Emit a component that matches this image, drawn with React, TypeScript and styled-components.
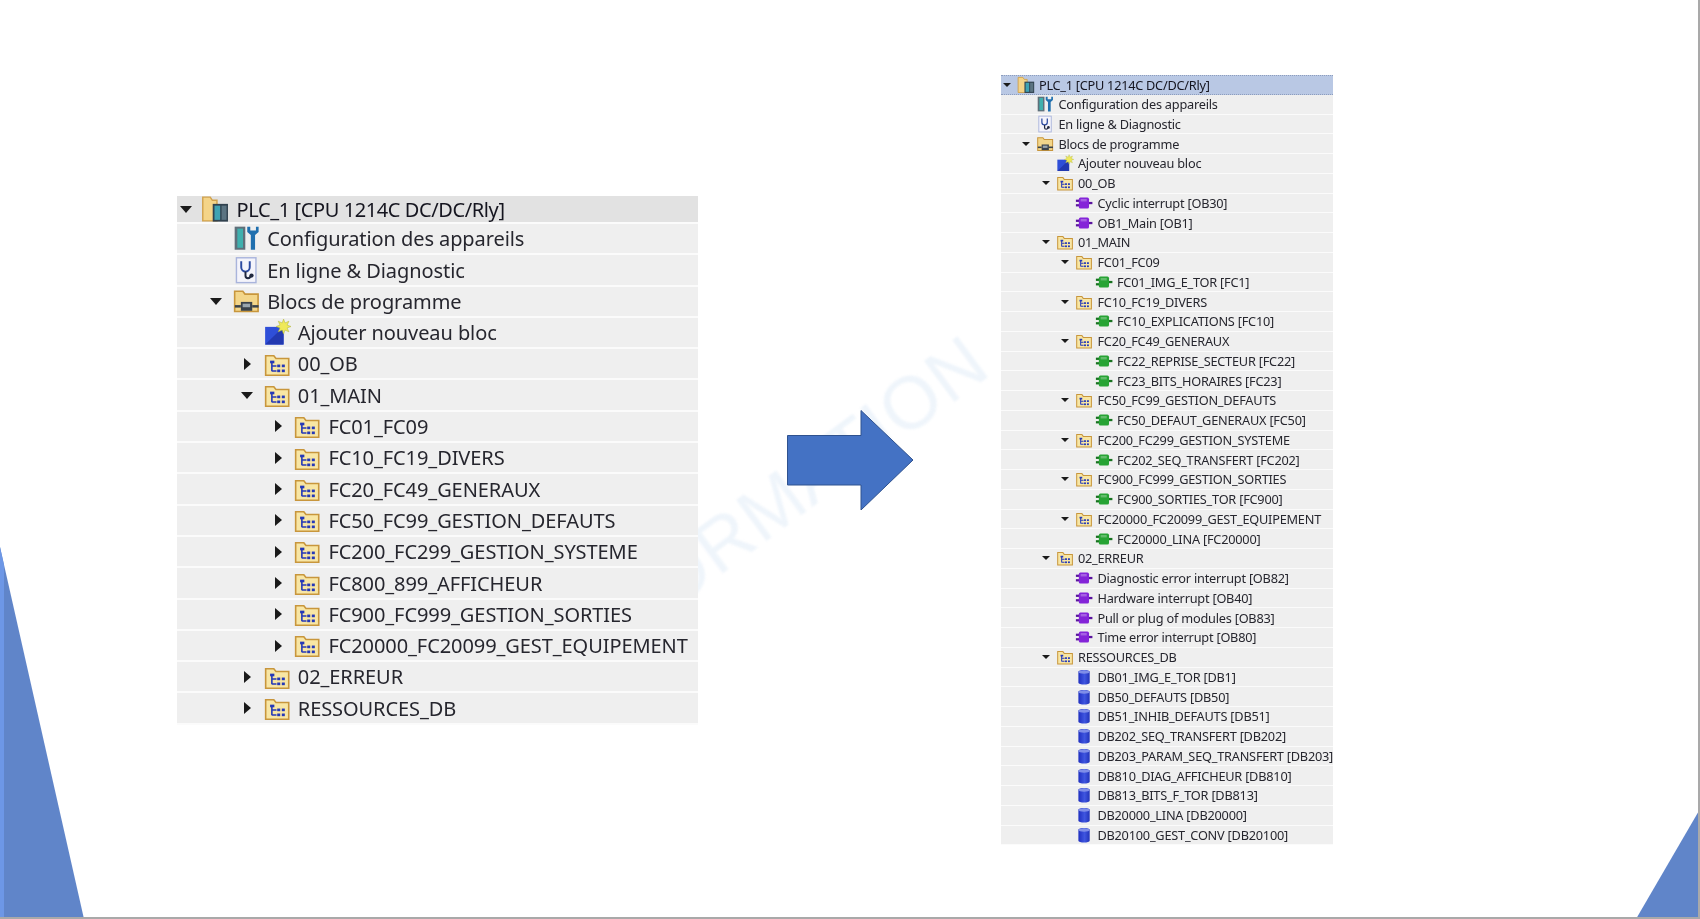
import React from "react";
import styled, { createGlobalStyle } from "styled-components";

type Kind = "device" | "tool" | "diag" | "program" | "add" | "group" | "ob" | "fc" | "db";
type Item = { level: number; kind: Kind; label: string; caret?: "open" | "closed" };

const leftItems: Item[] = [
  { level: 0, kind: "device", label: "PLC_1 [CPU 1214C DC/DC/Rly]", caret: "open" },
  { level: 1, kind: "tool", label: "Configuration des appareils" },
  { level: 1, kind: "diag", label: "En ligne & Diagnostic" },
  { level: 1, kind: "program", label: "Blocs de programme", caret: "open" },
  { level: 2, kind: "add", label: "Ajouter nouveau bloc" },
  { level: 2, kind: "group", label: "00_OB", caret: "closed" },
  { level: 2, kind: "group", label: "01_MAIN", caret: "open" },
  { level: 3, kind: "group", label: "FC01_FC09", caret: "closed" },
  { level: 3, kind: "group", label: "FC10_FC19_DIVERS", caret: "closed" },
  { level: 3, kind: "group", label: "FC20_FC49_GENERAUX", caret: "closed" },
  { level: 3, kind: "group", label: "FC50_FC99_GESTION_DEFAUTS", caret: "closed" },
  { level: 3, kind: "group", label: "FC200_FC299_GESTION_SYSTEME", caret: "closed" },
  { level: 3, kind: "group", label: "FC800_899_AFFICHEUR", caret: "closed" },
  { level: 3, kind: "group", label: "FC900_FC999_GESTION_SORTIES", caret: "closed" },
  { level: 3, kind: "group", label: "FC20000_FC20099_GEST_EQUIPEMENT", caret: "closed" },
  { level: 2, kind: "group", label: "02_ERREUR", caret: "closed" },
  { level: 2, kind: "group", label: "RESSOURCES_DB", caret: "closed" },
];

const rightItems: Item[] = [
  { level: 0, kind: "device", label: "PLC_1 [CPU 1214C DC/DC/Rly]", caret: "open" },
  { level: 1, kind: "tool", label: "Configuration des appareils" },
  { level: 1, kind: "diag", label: "En ligne & Diagnostic" },
  { level: 1, kind: "program", label: "Blocs de programme", caret: "open" },
  { level: 2, kind: "add", label: "Ajouter nouveau bloc" },
  { level: 2, kind: "group", label: "00_OB", caret: "open" },
  { level: 3, kind: "ob", label: "Cyclic interrupt [OB30]" },
  { level: 3, kind: "ob", label: "OB1_Main [OB1]" },
  { level: 2, kind: "group", label: "01_MAIN", caret: "open" },
  { level: 3, kind: "group", label: "FC01_FC09", caret: "open" },
  { level: 4, kind: "fc", label: "FC01_IMG_E_TOR [FC1]" },
  { level: 3, kind: "group", label: "FC10_FC19_DIVERS", caret: "open" },
  { level: 4, kind: "fc", label: "FC10_EXPLICATIONS [FC10]" },
  { level: 3, kind: "group", label: "FC20_FC49_GENERAUX", caret: "open" },
  { level: 4, kind: "fc", label: "FC22_REPRISE_SECTEUR [FC22]" },
  { level: 4, kind: "fc", label: "FC23_BITS_HORAIRES [FC23]" },
  { level: 3, kind: "group", label: "FC50_FC99_GESTION_DEFAUTS", caret: "open" },
  { level: 4, kind: "fc", label: "FC50_DEFAUT_GENERAUX [FC50]" },
  { level: 3, kind: "group", label: "FC200_FC299_GESTION_SYSTEME", caret: "open" },
  { level: 4, kind: "fc", label: "FC202_SEQ_TRANSFERT [FC202]" },
  { level: 3, kind: "group", label: "FC900_FC999_GESTION_SORTIES", caret: "open" },
  { level: 4, kind: "fc", label: "FC900_SORTIES_TOR [FC900]" },
  { level: 3, kind: "group", label: "FC20000_FC20099_GEST_EQUIPEMENT", caret: "open" },
  { level: 4, kind: "fc", label: "FC20000_LINA [FC20000]" },
  { level: 2, kind: "group", label: "02_ERREUR", caret: "open" },
  { level: 3, kind: "ob", label: "Diagnostic error interrupt [OB82]" },
  { level: 3, kind: "ob", label: "Hardware interrupt [OB40]" },
  { level: 3, kind: "ob", label: "Pull or plug of modules [OB83]" },
  { level: 3, kind: "ob", label: "Time error interrupt [OB80]" },
  { level: 2, kind: "group", label: "RESSOURCES_DB", caret: "open" },
  { level: 3, kind: "db", label: "DB01_IMG_E_TOR [DB1]" },
  { level: 3, kind: "db", label: "DB50_DEFAUTS [DB50]" },
  { level: 3, kind: "db", label: "DB51_INHIB_DEFAUTS [DB51]" },
  { level: 3, kind: "db", label: "DB202_SEQ_TRANSFERT [DB202]" },
  { level: 3, kind: "db", label: "DB203_PARAM_SEQ_TRANSFERT [DB203]" },
  { level: 3, kind: "db", label: "DB810_DIAG_AFFICHEUR [DB810]" },
  { level: 3, kind: "db", label: "DB813_BITS_F_TOR [DB813]" },
  { level: 3, kind: "db", label: "DB20000_LINA [DB20000]" },
  { level: 3, kind: "db", label: "DB20100_GEST_CONV [DB20100]" },
];

const GlobalStyle = createGlobalStyle`
  html, body { margin: 0; padding: 0; background: #fff; }
  body { font-family: "Noto Sans", "Open Sans", sans-serif; }
`;

const Slide = styled.div`
  position: relative;
  width: 1700px;
  height: 919px;
  overflow: hidden;
  background: #fff;
  box-sizing: border-box;
  padding-left: 177px;
  display: flex;
  align-items: flex-start;
`;

const Corner = styled.svg<{ $side: "left" | "right" }>`
  position: absolute;
  bottom: 0;
  ${(p) => (p.$side === "left" ? "left: 0;" : "right: 0;")}
`;

const Edge = styled.div`
  position: absolute;
  inset: 0;
  border-right: 2px solid #a9a9a9;
  border-bottom: 2px solid #a9a9a9;
  pointer-events: none;
`;

const Watermark = styled.div`
  position: absolute;
  right: 722px;
  top: 316px;
  transform-origin: 100% 50%;
  transform: rotate(-36.5deg);
  font-size: 74px;
  line-height: 1;
  letter-spacing: 1px;
  color: #eff5fb;
  white-space: nowrap;
  font-family: "Liberation Sans", sans-serif;
  filter: blur(0.8px);
`;

const Tree = styled.div<{ $size: number; $top: number; $width: number; $spacing: number }>`
  position: relative;
  z-index: 1;
  flex: none;
  width: ${(p) => p.$width}px;
  margin-top: ${(p) => p.$top}px;
  font-size: ${(p) => p.$size}px;
  letter-spacing: ${(p) => p.$spacing}em;
  filter: blur(0.35px);
`;

const Row = styled.div<{ $level: number; $pitch: number; $head?: "grey" | "blue" }>`
  box-sizing: border-box;
  height: ${(p) => (p.$head === "grey" ? 28 : p.$pitch)}px;
  padding-left: ${(p) => p.$level * 1.53}em;
  display: flex;
  align-items: center;
  background: ${(p) => (p.$head === "blue" ? "#b9c8e4" : p.$head === "grey" ? "#e2e2e2" : "#efefef")};
  border-bottom: 0.1em solid ${(p) => (p.$head === "blue" ? "#8d9dbd" : "#fbfbfb")};
  ${(p) => (p.$head === "blue" ? "border-bottom-style: dotted; border-top: 1px dotted #8d9dbd;" : "")}
  overflow: hidden;
`;

const CaretSlot = styled.span`
  flex: none;
  width: 1.22em;
  height: 1em;
  display: flex;
  align-items: center;
`;

const Caret = styled.span<{ $open: boolean }>`
  display: block;
  width: 0;
  height: 0;
  ${(p) =>
    p.$open
      ? `margin-left: 0.13em;
         border-left: 0.33em solid transparent;
         border-right: 0.33em solid transparent;
         border-top: 0.36em solid #1a1a1a;`
      : `margin-left: 0.3em;
         border-top: 0.33em solid transparent;
         border-bottom: 0.33em solid transparent;
         border-left: 0.36em solid #1a1a1a;`}
`;

const IconBox = styled.svg`
  flex: none;
  width: 1.42em;
  height: 1.42em;
`;

const Label = styled.span<{ $head?: boolean }>`
  margin-left: 0.34em;
  white-space: nowrap;
  line-height: 1;
  color: ${(p) => (p.$head ? "#15151f" : "#26262e")};
  ${(p) => (p.$head ? "letter-spacing: -0.02em;" : "")}
  font-family: "Noto Sans", sans-serif;
  padding-top: 0.06em;
`;

const ArrowShape = styled.svg`
  flex: none;
  margin: 406px 0 0 88px;
  position: relative;
  z-index: 1;
`;

const RightTree = styled(Tree)`
  margin-left: 85px;
`;

const Folder = ({ children }: { children?: React.ReactNode }) => (
  <>
    <path d="M1.5 3.2h4.6l1.2 1.6h7.2v9.4H1.5z" fill="#f8e6a4" stroke="#c8963c" strokeWidth="0.9" />
    {children}
  </>
);

function Icon({ kind }: { kind: Kind }) {
  switch (kind) {
    case "device":
      return (
        <IconBox viewBox="0 0 16 16">
          <path d="M1 1.2h4.2l1.2 1.8H9v11.6H1z" fill="#f4d488" stroke="#d2a24c" strokeWidth="0.8" />
          <rect x="6.6" y="5" width="8.6" height="10" fill="#31424f" />
          <rect x="7.6" y="6" width="3.2" height="8" fill="#3fa3b3" />
          <rect x="11.6" y="6" width="2.8" height="8" fill="#5b7482" />
        </IconBox>
      );
    case "tool":
      return (
        <IconBox viewBox="0 0 16 16">
          <rect x="1.5" y="1.5" width="6" height="13" fill="#5f6f7a" />
          <rect x="3" y="2.6" width="3.2" height="10.8" fill="#3fb0ae" />
          <path d="M8.6 1.5v3l2 1.7V14.5h2.4V6.2l2-1.7v-3l-1.5 0v2.2h-3.2V1.5z" fill="#1f6fae" />
        </IconBox>
      );
    case "diag":
      return (
        <IconBox viewBox="0 0 16 16">
          <rect x="2.5" y="1" width="11" height="14" fill="#f4f4fb" stroke="#a9b4dc" strokeWidth="0.8" />
          <path d="M5.2 3v3.4a2.4 2.4 0 0 0 4.8 0V3" fill="none" stroke="#2c4aa0" strokeWidth="1.1" />
          <path d="M7.6 8.8v2.4c0 1.8 2.8 1.8 2.8 0" fill="none" stroke="#20283f" strokeWidth="1.1" />
          <circle cx="11" cy="11" r="1.2" fill="#20283f" />
        </IconBox>
      );
    case "program":
      return (
        <IconBox viewBox="0 0 16 16">
          <path d="M1.5 2.4h4.6l1.2 1.6h7.4v9.8H1.5z" fill="#f3d68a" stroke="#c8963c" strokeWidth="0.9" />
          <rect x="5" y="8.4" width="6.4" height="5" fill="#3a424a" />
          <rect x="1.6" y="10.2" width="3.4" height="1.4" fill="#3a424a" />
          <rect x="11.4" y="10.2" width="3.6" height="1.4" fill="#3a424a" />
          <rect x="6" y="9.4" width="4.2" height="2" fill="#9aa6ad" />
        </IconBox>
      );
    case "add":
      return (
        <IconBox viewBox="0 0 16 16">
          <rect x="1.2" y="5" width="10.4" height="10" fill="#2f4fd8" />
          <path d="M1.2 15L11.6 5v10z" fill="#2339b0" />
          <path d="M11.6 .6l.8 2.2 2.2-1-1 2.2 2.2.8-2.2.8 1 2.2-2.2-1-.8 2.2-.8-2.2-2.2 1 1-2.2-2.2-.8 2.2-.8-1-2.2 2.2 1z" fill="#efe95a" stroke="#b2b73a" strokeWidth="0.3" />
        </IconBox>
      );
    case "group":
      return (
        <IconBox viewBox="0 0 16 16">
          <Folder>
            <path d="M5 7v5M5 9h2.6M5 11.8h2.6" stroke="#2438b8" strokeWidth="0.9" fill="none" />
            <rect x="4" y="6" width="2.4" height="1.5" fill="#2438b8" />
            <rect x="8" y="8.2" width="1.7" height="1.5" fill="#2438b8" />
            <rect x="10.6" y="8.2" width="1.7" height="1.5" fill="#2438b8" />
            <rect x="8" y="11" width="1.7" height="1.5" fill="#2438b8" />
            <rect x="10.6" y="11" width="1.7" height="1.5" fill="#2438b8" />
          </Folder>
        </IconBox>
      );
    case "ob":
    case "fc": {
      const body = kind === "ob" ? "#8424d8" : "#27a334";
      const dark = kind === "ob" ? "#5a149e" : "#17721f";
      return (
        <IconBox viewBox="0 0 16 16">
          <rect x="0.8" y="5" width="3.2" height="2" fill={dark} />
          <rect x="0.8" y="9" width="3.2" height="2" fill={dark} />
          <rect x="12" y="7" width="3.4" height="2" fill={dark} />
          <rect x="3.4" y="3.2" width="9" height="9.6" rx="1.4" fill={body} />
          <rect x="5" y="4.4" width="5.4" height="2.2" fill="#fff" opacity="0.28" />
        </IconBox>
      );
    }
    case "db":
      return (
        <IconBox viewBox="0 0 16 16">
          <defs>
            <linearGradient id="dbFill" x1="0" x2="1" y1="0" y2="0">
              <stop offset="0" stopColor="#1f2fc0" />
              <stop offset="0.55" stopColor="#3f56e0" />
              <stop offset="1" stopColor="#2233b8" />
            </linearGradient>
          </defs>
          <path d="M3 3.4c0-2.2 10-2.2 10 0v9.4c0 2.4-10 2.4-10 0z" fill="url(#dbFill)" />
          <ellipse cx="8" cy="3.5" rx="5" ry="1.5" fill="#7f8ee8" />
        </IconBox>
      );
  }
}

function TreeRows({ items, head, pitch }: { items: Item[]; head: "grey" | "blue"; pitch: number }) {
  return (
    <>
      {items.map((item, i) => (
        <Row key={i} $level={item.level} $pitch={pitch} $head={i === 0 ? head : undefined}>
          <CaretSlot>{item.caret && <Caret $open={item.caret === "open"} />}</CaretSlot>
          <Icon kind={item.kind} />
          <Label $head={i === 0}>{item.label}</Label>
        </Row>
      ))}
    </>
  );
}

export default function App() {
  return (
    <Slide>
      <GlobalStyle />
      <Corner $side="left" width="85" height="372" viewBox="0 0 85 372">
        <path d="M0 0L84 372H0z" fill="#6085c9" />
        <path d="M0 0L4 18V372H0z" fill="#6d97e6" />
      </Corner>
      <Corner $side="right" width="64" height="110" viewBox="0 0 64 110">
        <path d="M64 0V110H0z" fill="#6085c9" />
      </Corner>
      <Watermark>FORMATION</Watermark>
      <Tree $size={20} $top={196} $width={521} $spacing={-0.004}>
        <TreeRows items={leftItems} head="grey" pitch={31.3} />
      </Tree>
      <ArrowShape width="130" height="104" viewBox="0 0 130 104">
        <path d="M1.5 29.5H75V4.5L127 54L75 104V79H1.5z" fill="#4472c4" stroke="#2f528f" strokeWidth="1" />
      </ArrowShape>
      <RightTree $size={12.74} $top={75} $width={332} $spacing={-0.017}>
        <TreeRows items={rightItems} head="blue" pitch={19.75} />
      </RightTree>
      <Edge />
    </Slide>
  );
}
